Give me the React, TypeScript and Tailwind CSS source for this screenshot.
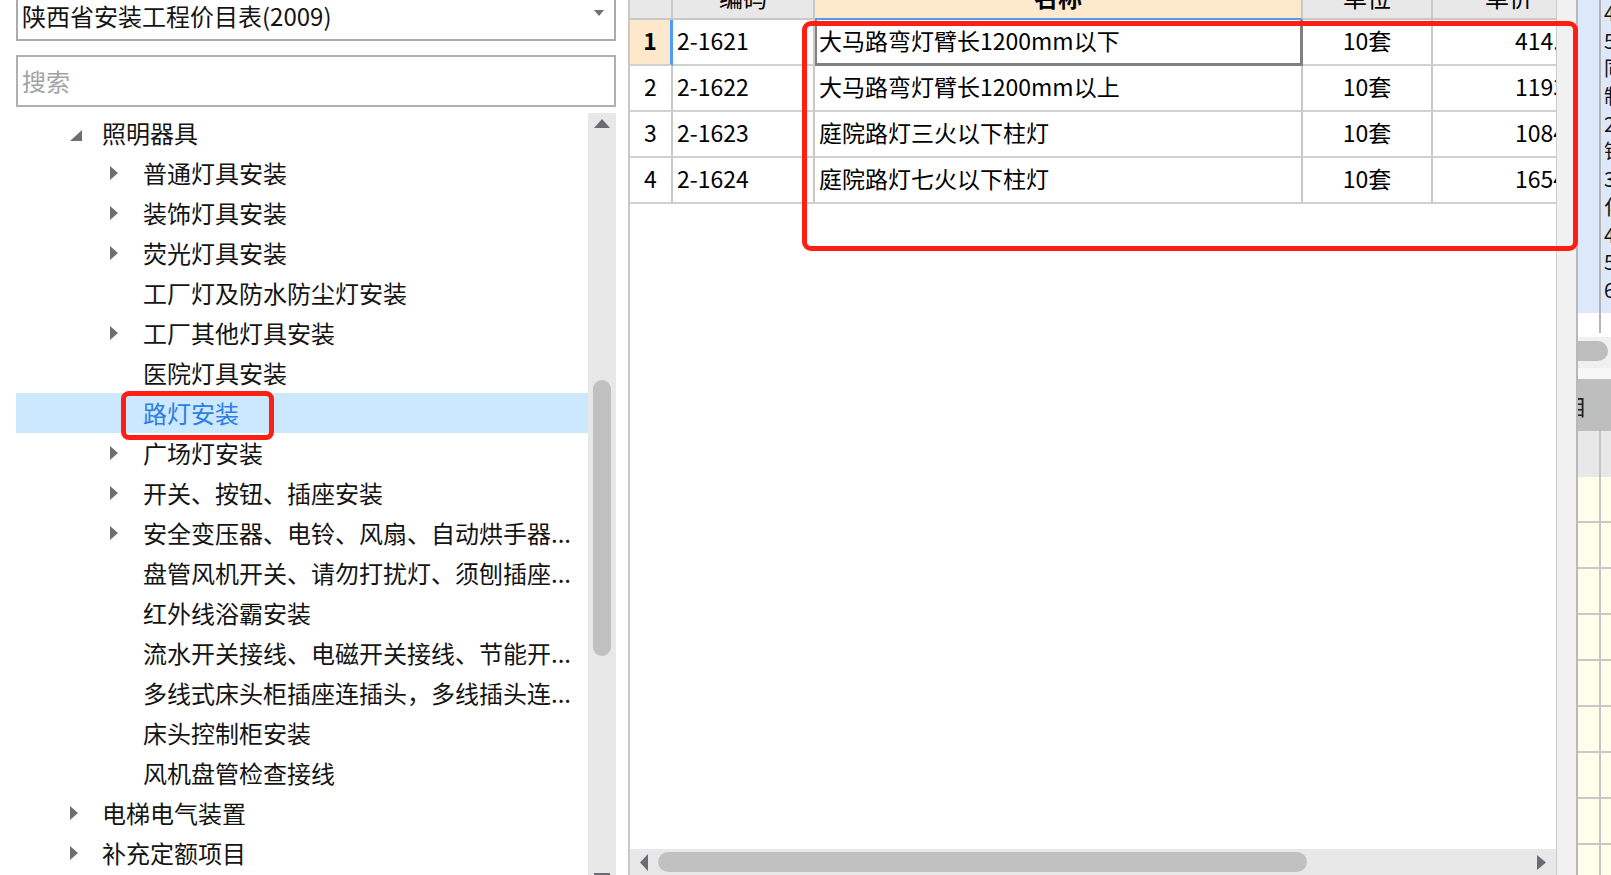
import React from "react";

type Item = {
  label: string;
  level: 1 | 2;
  arrow: "expanded" | "collapsed" | "none";
  selected?: boolean;
};

const items: Item[] = [
  { label: "照明器具", level: 1, arrow: "expanded" },
  { label: "普通灯具安装", level: 2, arrow: "collapsed" },
  { label: "装饰灯具安装", level: 2, arrow: "collapsed" },
  { label: "荧光灯具安装", level: 2, arrow: "collapsed" },
  { label: "工厂灯及防水防尘灯安装", level: 2, arrow: "none" },
  { label: "工厂其他灯具安装", level: 2, arrow: "collapsed" },
  { label: "医院灯具安装", level: 2, arrow: "none" },
  { label: "路灯安装", level: 2, arrow: "none", selected: true },
  { label: "广场灯安装", level: 2, arrow: "collapsed" },
  { label: "开关、按钮、插座安装", level: 2, arrow: "collapsed" },
  { label: "安全变压器、电铃、风扇、自动烘手器...", level: 2, arrow: "collapsed" },
  { label: "盘管风机开关、请勿打扰灯、须刨插座...", level: 2, arrow: "none" },
  { label: "红外线浴霸安装", level: 2, arrow: "none" },
  { label: "流水开关接线、电磁开关接线、节能开...", level: 2, arrow: "none" },
  { label: "多线式床头柜插座连插头，多线插头连...", level: 2, arrow: "none" },
  { label: "床头控制柜安装", level: 2, arrow: "none" },
  { label: "风机盘管检查接线", level: 2, arrow: "none" },
  { label: "电梯电气装置", level: 1, arrow: "collapsed" },
  { label: "补充定额项目", level: 1, arrow: "collapsed" },
];

const rows = [
  ["1", "2-1621", "大马路弯灯臂长1200mm以下", "10套", "414.16"],
  ["2", "2-1622", "大马路弯灯臂长1200mm以上", "10套", "1193.77"],
  ["3", "2-1623", "庭院路灯三火以下柱灯", "10套", "1084.21"],
  ["4", "2-1624", "庭院路灯七火以下柱灯", "10套", "1654.39"],
];

const sideChars = ["4", "5", "同", "制", "2", "钻", "3", "化", "4", "5", "6"];

function TreeArrow({ type }: { type: Item["arrow"] }) {
  if (type === "expanded") {
    return (
      <svg width="12" height="11" viewBox="0 0 12 11" className="mt-[4px]">
        <polygon points="12,0 12,11 0,11" fill="#6f6f6f" />
      </svg>
    );
  }
  if (type === "collapsed") {
    return (
      <svg width="8" height="14" viewBox="0 0 8 14">
        <polygon points="0,0 8,7 0,14" fill="#6f6f6f" />
      </svg>
    );
  }
  return null;
}

function TreeRow({ item }: { item: Item }) {
  const lvl1 = item.level === 1;
  return (
    <div
      className={
        "relative h-[40px] flex items-center whitespace-nowrap " +
        (item.selected ? "bg-[#cce8ff]" : "")
      }
    >
      <div className={lvl1 ? "pl-[54px]" : "pl-[94px]"} />
      <div className={(lvl1 ? "w-[32px]" : "w-[33px]") + " flex items-center"}>
        <TreeArrow type={item.arrow} />
      </div>
      <span
        className={
          "text-[24px] leading-[40px] " +
          (item.selected ? "text-[#2d7de6]" : "text-[#141414]")
        }
      >
        {item.label}
      </span>
      {item.selected && (
        <div className="absolute left-[105px] top-[-2px] w-[153px] h-[49px] border-[5px] border-[#fe1f14] rounded-[8px] pointer-events-none" />
      )}
    </div>
  );
}

export default function App() {
  return (
    <div className="relative w-[1611px] h-[875px] overflow-hidden flex bg-white font-['Noto_Sans_CJK_SC','Microsoft_YaHei',sans-serif] text-black">
      {/* Left panel */}
      <div className="w-[628px] h-full flex flex-col shrink-0">
        <div className="ml-[16px] mt-[-9px] w-[600px] h-[50px] shrink-0 border-2 border-[#ababab] flex items-center pl-[4px] pr-[10px]">
          <span className="flex-1 text-[24px] leading-none text-[#141414] whitespace-nowrap">
            陕西省安装工程价目表(2009)
          </span>
          <svg width="10" height="6" viewBox="0 0 10 6" className="mt-[-6px]">
            <polygon points="0,0 10,0 5,6" fill="#707070" />
          </svg>
        </div>
        <div className="ml-[16px] mt-[14px] w-[600px] h-[52px] shrink-0 border-2 border-[#b0b0b0] flex items-center pl-[4px]">
          <span className="text-[24px] leading-none text-[#a3a3a3]">搜索</span>
        </div>
        <div className="mt-[6px] flex-1 flex min-h-0">
          <div className="ml-[16px] w-[572px] flex flex-col overflow-hidden">
            {items.map((it, i) => (
              <TreeRow key={i} item={it} />
            ))}
          </div>
          <div className="w-[28px] bg-[#e8e8e8] flex flex-col items-center">
            <svg width="16" height="9" viewBox="0 0 16 9" className="mt-[6px] shrink-0">
              <polygon points="8,0 16,9 0,9" fill="#6b6b73" />
            </svg>
            <div className="mt-[252px] w-[18px] h-[276px] rounded-full bg-[#c1c1c1] shrink-0" />
            <div className="mt-auto w-[16px] h-[2px] bg-[#6b6b73]" />
          </div>
        </div>
      </div>

      {/* Table panel */}
      <div className="w-[928px] h-full border-l-2 border-[#c8c8c8] flex flex-col shrink-0">
        <div className="flex-1 overflow-hidden">
          <div className="w-[957px]">
            {/* header */}
            <div className="flex h-[20px]">
              <div className="w-[43px] h-full bg-[#e8e8e8] border-r-2 border-b-2 border-[#c8c8c8]" />
              <div className="w-[142px] h-full bg-[#e8e8e8] border-r-2 border-b-2 border-[#c8c8c8] overflow-hidden flex justify-center">
                <div className="mt-[-15px] text-[24px] leading-[24px]">编码</div>
              </div>
              <div className="w-[488px] h-full bg-[#fde9cc] border-r-2 border-[#c8c8c8] border-b-2 border-b-[#4c9ef0] overflow-hidden flex justify-center">
                <div className="mt-[-15px] text-[24px] leading-[24px] font-bold">名称</div>
              </div>
              <div className="w-[130px] h-full bg-[#e8e8e8] border-r-2 border-b-2 border-[#c8c8c8] overflow-hidden flex justify-center">
                <div className="mt-[-15px] text-[24px] leading-[24px]">单位</div>
              </div>
              <div className="w-[154px] h-full bg-[#e8e8e8] border-r-2 border-b-2 border-[#c8c8c8] overflow-hidden flex justify-center">
                <div className="mt-[-15px] text-[24px] leading-[24px]">单价</div>
              </div>
            </div>
            {rows.map((r, i) => {
              const first = i === 0;
              return (
                <div key={i} className="flex h-[46px] text-[23px] leading-none">
                  <div
                    className={
                      "w-[43px] h-full border-b-2 border-b-[#d0d0d0] flex items-center justify-center pb-[3px] " +
                      (first
                        ? "bg-[#fee8cc] border-r-[3px] border-r-[#4a9df8] font-bold"
                        : "bg-white border-r-2 border-r-[#c8c8c8]")
                    }
                  >
                    {r[0]}
                  </div>
                  <div className="w-[142px] h-full border-r-2 border-r-[#c8c8c8] border-b-2 border-b-[#d0d0d0] flex items-center pl-[4px] pb-[3px]">
                    {r[1]}
                  </div>
                  <div
                    className={
                      "w-[488px] h-full flex items-center whitespace-nowrap pb-[3px] " +
                      (first
                        ? "border-l-2 border-r-[3px] border-b-[3px] border-[#808080] pl-[2px]"
                        : "border-r-2 border-r-[#c8c8c8] border-b-2 border-b-[#d0d0d0] pl-[4px]")
                    }
                  >
                    {r[2]}
                  </div>
                  <div className="w-[130px] h-full border-r-2 border-r-[#c8c8c8] border-b-2 border-b-[#d0d0d0] flex items-center justify-center pb-[3px]">
                    {r[3]}
                  </div>
                  <div className="w-[154px] h-full border-r-2 border-r-[#c8c8c8] border-b-2 border-b-[#d0d0d0] flex items-center pl-[82px] pb-[3px] whitespace-nowrap">
                    {r[4]}
                  </div>
                </div>
              );
            })}
          </div>
        </div>
        {/* horizontal scrollbar */}
        <div className="h-[26px] shrink-0 bg-[#e8e8e8] flex items-center">
          <svg width="8" height="17" viewBox="0 0 8 17" className="ml-[10px] shrink-0">
            <polygon points="8,0 8,17 0,8.5" fill="#6b6b73" />
          </svg>
          <div className="ml-[10px] w-[649px] h-[20px] rounded-full bg-[#c1c1c1] shrink-0" />
          <div className="flex-1" />
          <svg width="9" height="15" viewBox="0 0 9 15" className="mr-[10px] shrink-0">
            <polygon points="0,0 9,7.5 0,15" fill="#6b6b73" />
          </svg>
        </div>
      </div>

      {/* Table vertical scrollbar */}
      <div className="w-[22px] h-full shrink-0 bg-[#f1f1f1] border-l border-l-[#cccccc] border-r-2 border-r-[#b9b9b9]" />

      {/* Right strip */}
      <div className="w-[33px] h-full shrink-0 flex flex-col overflow-hidden">
        <div className="h-[337px] flex shrink-0">
          <div className="w-[21px] flex flex-col">
            <div className="h-[313px] bg-[#dde9fa]" />
            <div className="flex-1 bg-white" />
          </div>
          <div className="w-[2px] flex flex-col">
            <div className="h-[333px] bg-[#b4b4b4]" />
            <div className="flex-1 bg-white" />
          </div>
          <div className="flex-1 flex flex-col overflow-hidden">
            <div className="h-[313px] bg-[#dde9fa] pl-[3px] overflow-hidden">
              <div className="mt-[-1px] flex flex-col text-[20px] leading-[27.7px] text-[#111]">
                {sideChars.map((c, i) => (
                  <span key={i} className="h-[27.7px] whitespace-nowrap">
                    {c}
                  </span>
                ))}
              </div>
            </div>
            <div className="flex-1 bg-white" />
          </div>
        </div>
        <div className="h-[31px] shrink-0 bg-[#f0f0f0] pt-[4px]">
          <div className="w-[30px] h-[20px] rounded-r-full bg-[#bdbdbd]" />
        </div>
        <div className="h-[11px] shrink-0 bg-[#f7f7f7]" />
        <div className="h-[52px] shrink-0 bg-[#bebebe] flex items-center overflow-hidden">
          <span className="ml-[-13px] text-[22px] leading-none text-[#222]">目</span>
        </div>
        <div className="h-[46px] shrink-0 bg-[#e8e8e8] flex">
          <div className="w-[23px] border-r-2 border-r-[#c4c4c4]" />
        </div>
        <div className="h-[44px] shrink-0 bg-[#fffeea] flex">
          <div className="w-[23px] border-r-2 border-r-[#c4c4c4]" />
        </div>
        {Array.from({ length: 8 }).map((_, i) => (
          <div key={i} className="h-[46px] shrink-0 bg-[#fffeea] border-t-2 border-t-[#c8c8c8] flex">
            <div className="w-[23px] border-r-2 border-r-[#c4c4c4]" />
          </div>
        ))}
      </div>

      {/* Red annotation over table */}
      <div className="absolute left-[802px] top-[21px] w-[776px] h-[230px] border-[5px] border-[#fe1f14] rounded-[9px] pointer-events-none" />
    </div>
  );
}
